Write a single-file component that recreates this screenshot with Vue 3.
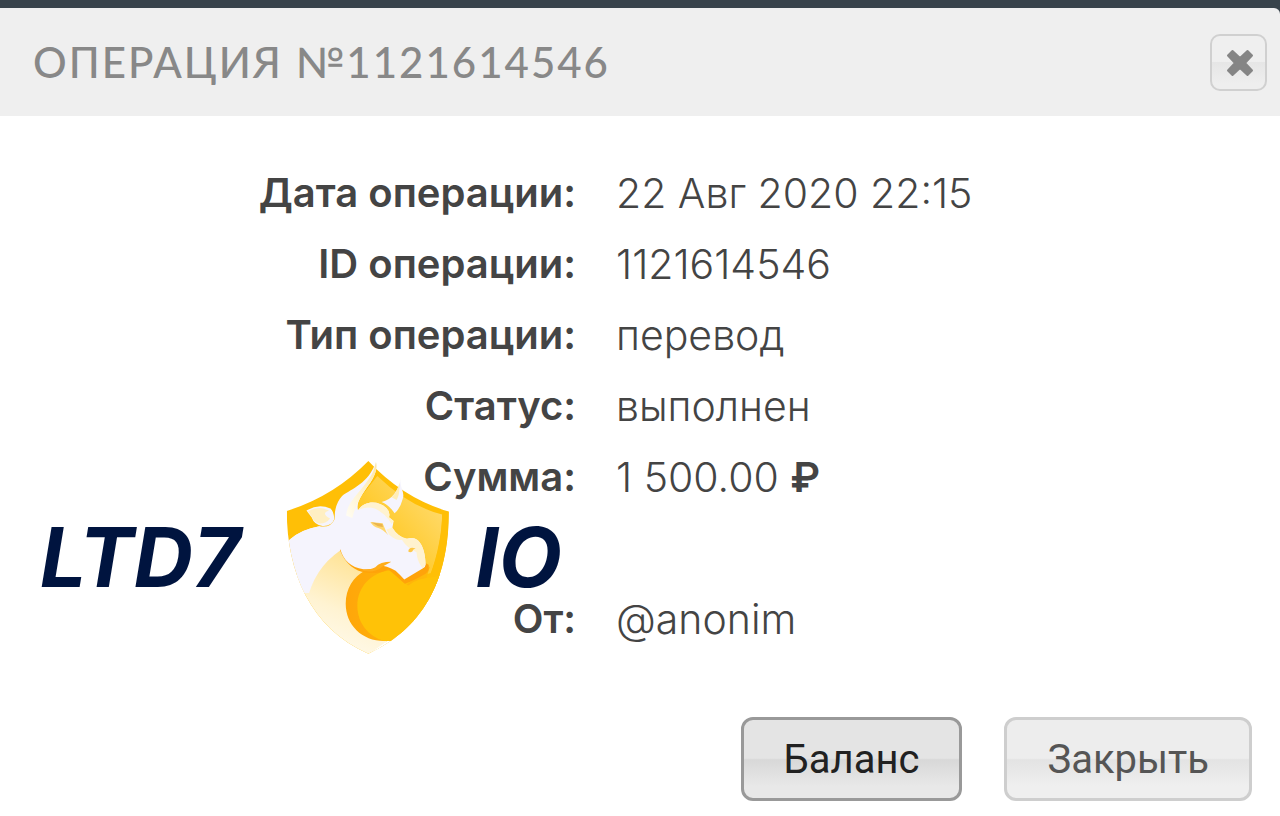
<template>
  <div class="modal">
    <header class="modal__header">
      <h1 class="modal__title">ОПЕРАЦИЯ №1121614546</h1>
      <button class="modal__close" type="button" aria-label="Закрыть окно">
        <svg class="modal__cross" viewBox="0 0 28 28" aria-hidden="true">
          <path
            d="M6.500 2 14 9 21.500 2 26 6.500 19 14 26 21.500 21.500 26 14 19 6.500 26 2 21.500 9 14 2 6.500Z"
            fill="#858585"
            stroke="#858585"
            stroke-width="2"
            stroke-linejoin="round"
          />
        </svg>
      </button>
    </header>

    <main class="modal__body">
      <dl class="details">
        <div
          v-for="row in rows"
          :key="row.label"
          class="details__row"
          :class="{ 'details__row--spaced': row.spaced }"
        >
          <dt class="details__label">{{ row.label }}:</dt>
          <dd class="details__value">
            {{ row.value }} <b v-if="row.currency" class="details__currency">{{ row.currency }}</b>
          </dd>
        </div>
      </dl>

      <div class="brand">
        <span class="brand__word">LTD7</span>
        <svg class="brand__shield" viewBox="48 30 492 586" aria-hidden="true">
          <defs>
            <linearGradient id="shield-panel" x1="0" y1="1" x2="1" y2="0">
              <stop offset="0.2" stop-color="#ffc20a" />
              <stop offset="1" stop-color="#ffdf80" />
            </linearGradient>
            <linearGradient id="shield-chest" x1="0.7" y1="0" x2="0.3" y2="1">
              <stop offset="0" stop-color="#ffe08a" />
              <stop offset="0.55" stop-color="#fff3d2" />
              <stop offset="1" stop-color="#fffcf4" />
            </linearGradient>
            <linearGradient id="shield-coin" x1="0" y1="0" x2="1" y2="0">
              <stop offset="0" stop-color="#ffa60a" />
              <stop offset="1" stop-color="#ffb90a" />
            </linearGradient>
            <linearGradient id="shield-horn" x1="0" y1="1" x2="1" y2="0">
              <stop offset="0" stop-color="#fffdf5" />
              <stop offset="1" stop-color="#ffe7a0" />
            </linearGradient>
            <clipPath id="shield-clip">
              <path d="M295 33Q190 140 50 183C50 365 120 535 295 612C475 530 537 370 537 185Q400 145 295 33Z" />
            </clipPath>
          </defs>
          <g clip-path="url(#shield-clip)">
            <rect x="40" y="20" width="510" height="600" fill="#ffbf06" />
            <path d="M322 78Q415 168 517 194C515 275 500 335 470 400L300 330 250 170Z" fill="url(#shield-panel)" />
            <path d="M210 290C240 360 270 365 300 362L350 575 295 625 40 625 40 400Z" fill="url(#shield-chest)" />
            <path d="M40 282 60 268Q95 238 148 229L230 290Q145 338 117 430L40 430Z" fill="#f5f4fd" />
            <path d="M350 575 295 615 500 615 540 400Z" fill="#fff" />
            <path d="M343 575 530 380 480 370 390 400 300 380Z" fill="#ffbf06" />
            <path d="M537 185 517 194C515 300 470 460 365 574L400 575C490 480 537 350 537 185Z" fill="#ffbf06" />
            <path d="M343 574C275 574 227 525 227 462C227 415 250 382 285 362L365 352 410 405 480 350 450 450 365 574Z" fill="url(#shield-coin)" />
            <path d="M343 574C295 560 262 520 262 468C262 410 305 368 358 362Q382 370 400 398L415 407Q440 385 500 380L535 350 500 460Q450 540 365 574Z" fill="#ffc207" />
          </g>
          <path d="M206 290C218 330 245 358 275 366C315 375 340 366 355 358L405 402Q425 396 467 372Q480 362 476 345L430 320 300 310Z" fill="#ffa30a" />
          <path
            d="M60 268Q95 238 148 229Q182 235 194 207Q192 165 216 138C245 116 295 101 318 36C328 75 288 110 270 145Q260 163 264 181C285 151 325 152 349 174Q362 187 357 202L371 213L367 235Q385 262 411 267C446 253 466 291 467 343Q468 351 458 356L403 389Q391 376 377 363Q350 347 326 346Q325 360 280 358C243 354 220 330 211 299Q145 338 119 420Q73 350 60 268Z"
            fill="#f5f4fd"
          />
          <path d="M228 197C232 155 265 135 300 82Q312 65 318 36C328 75 288 110 270 145Q255 170 247 204Z" fill="url(#shield-horn)" />
          <path d="M335 156Q382 145 394 80C385 113 407 124 398 148Q391 176 374 190Q355 163 335 156Z" fill="#f5f4fd" />
          <path d="M365 142Q385 123 394 80C383 113 394 125 380 150Z" fill="#ffedb7" />
          <path d="M109 182Q145 160 181 176Q190 182 193 207Q184 230 157 228Q132 225 125 203Z" fill="#f5f4fd" />
          <path d="M114 184Q145 166 177 182Q151 190 180 206Q168 222 148 221Q132 217 126 202Z" fill="#ffefc3" />
          <path d="M264 181C285 151 325 152 349 174Q362 187 357 202L371 213L365 222Q345 190 315 176Q288 167 264 181Z" fill="#fff3d0" />
          <path d="M350 239 367 233Q385 262 411 267C446 253 466 291 467 343L458 356Q440 330 440 307Q410 294 396 270Q380 274 357 254Z" fill="#fff2cf" />
          <path d="M301 216 338 220 349 246 355 256Q339 238 325 234Q310 231 301 216Z" fill="#ffd66b" />
          <path d="M304 217 337 222 339 231 324 229Z" fill="#eab44e" />
          <path d="M415 305Q417 289 437 296Q429 297 427 305Q421 309 415 305Z" fill="#ffc849" />
          <path d="M364 336Q330 336 316 352Q297 362 268 360Q310 374 337 351Z" fill="#ffad1a" />
        </svg>
        <span class="brand__word">IO</span>
      </div>
    </main>

    <footer class="modal__footer">
      <button class="btn btn--active" type="button">Баланс</button>
      <button class="btn" type="button">Закрыть</button>
    </footer>
  </div>
</template>

<script setup>
const rows = [
  { label: 'Дата операции', value: '22 Авг 2020 22:15' },
  { label: 'ID операции', value: '1121614546' },
  { label: 'Тип операции', value: 'перевод' },
  { label: 'Статус', value: 'выполнен' },
  { label: 'Сумма', value: '1 500.00', currency: '₽' },
  { label: 'От', value: '@anonim', spaced: true }
]
</script>

<style>
body {
  background: #ffffff;
}
</style>

<style scoped>
.modal {
  background: #38434b;
  padding-top: 8px;
  font-family: Inter, "Liberation Sans", sans-serif;
  color: #444444;
}

.modal__header {
  display: flex;
  justify-content: space-between;
  align-items: center;
  min-height: 108px;
  padding: 0 13px 0 33px;
  box-sizing: border-box;
  border-top-right-radius: 6px;
  background: #efefef;
}

.modal__title {
  margin: 0;
  font-family: Lato, "Liberation Sans", sans-serif;
  font-size: 42px;
  font-weight: 500;
  line-height: 52px;
  letter-spacing: 2px;
  color: #888888;
}

.modal__close {
  display: flex;
  justify-content: center;
  align-items: center;
  width: 57px;
  height: 57px;
  padding: 2px 0 0 2px;
  border: 2px solid #d0d0d0;
  border-radius: 10px;
  background: linear-gradient(#efefef 48%, #e6e6e6 50%, #eeeeee 90%);
  cursor: pointer;
}

.modal__cross {
  width: 28px;
  height: 28px;
}

.modal__body {
  position: relative;
  padding: 41px 0 63px;
  background: #ffffff;
}

.details {
  margin: 0;
}

.details__row {
  display: grid;
  grid-template-columns: 45% 1fr;
  align-items: center;
  column-gap: 40px;
  min-height: 71px;
  line-height: 40px;
}

.details__row--spaced {
  margin-top: 71px;
}

.details__label {
  font-size: 40px;
  font-weight: 600;
  text-align: right;
}

.details__value {
  margin: 0;
  font-size: 41px;
  font-weight: 300;
}

.details__currency {
  font-weight: 600;
}

/* Logo lies over the details list */
.brand {
  position: absolute;
  top: 344px;
  left: 40px;
  display: flex;
  align-items: center;
}

.brand__word {
  font-size: 82px;
  font-style: italic;
  font-weight: 700;
  line-height: 60px;
  color: #00143f;
}

.brand__shield {
  width: 164px;
  height: 195px;
  margin: 0 26px 0 45px;
}

.modal__footer {
  display: flex;
  justify-content: flex-end;
  gap: 42px;
  padding: 0 28px 15px;
  background: #ffffff;
}

.btn {
  height: 84px;
  padding: 0 40px;
  border: 3px solid #cecece;
  border-radius: 12px;
  background: linear-gradient(#ededed 49%, #e3e3e3 51%, #efefef 85%);
  font-family: Roboto, "Liberation Sans", sans-serif;
  font-size: 40px;
  color: #555555;
  cursor: pointer;
}

.btn--active {
  border-color: #999999;
  background: linear-gradient(#e4e4e4 49%, #d8d8d8 51%, #e8e8e8 85%);
  color: #212121;
}
</style>
